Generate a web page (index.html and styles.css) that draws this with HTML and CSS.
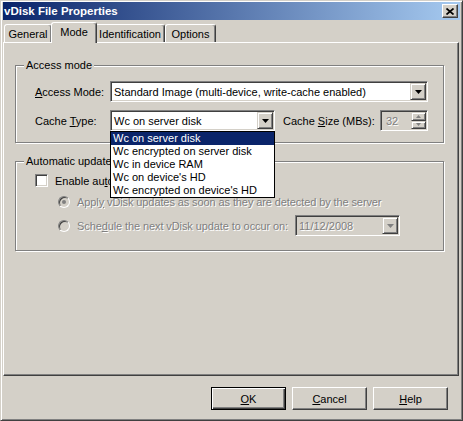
FILE: index.html
```html
<!DOCTYPE html>
<html>
<head>
<meta charset="utf-8">
<title>vDisk File Properties</title>
<link rel="stylesheet" href="styles.css">
</head>
<body>
<div class="window">
  <div class="titlebar">
    <span class="title">vDisk File Properties</span>
    <span class="close"><svg width="8" height="7" viewBox="0 0 8 7"><path d="M0.5 0.5 7.5 6.5M7.5 0.5 0.5 6.5" stroke="#000" stroke-width="1.7" fill="none"/></svg></span>
  </div>
  <div class="tabs">
    <div class="tab tab-general">General</div>
    <div class="tab tab-mode active">Mode</div>
    <div class="tab tab-ident">Identification</div>
    <div class="tab tab-options">Options</div>
  </div>
  <div class="panel">
    <div class="group group-access">
      <span class="group-title">Access mode</span>
      <div class="form-grid">
        <span class="lbl"><u>A</u>ccess Mode:</span>
        <div class="combo combo-wide">
          <span class="combo-text">Standard Image (multi-device, write-cache enabled)</span>
          <span class="arrow-btn"><svg width="7" height="4" viewBox="0 0 7 4"><path d="M0 0h7L3.5 4z" fill="#000"/></svg></span>
        </div>
        <span class="lbl">Cache <u>T</u>ype:</span>
        <div class="row2">
          <div class="combo-wrap">
            <div class="combo combo-narrow">
              <span class="combo-text">Wc on server disk</span>
              <span class="arrow-btn"><svg width="7" height="4" viewBox="0 0 7 4"><path d="M0 0h7L3.5 4z" fill="#000"/></svg></span>
            </div>
            <ul class="dropdown">
              <li class="selected">Wc on server disk</li>
              <li>Wc encrypted on server disk</li>
              <li>Wc in device RAM</li>
              <li>Wc on device's HD</li>
              <li>Wc encrypted on device's HD</li>
            </ul>
          </div>
          <span class="lbl size-lbl">Cache <u>S</u>ize (MBs):</span>
          <div class="spin">
            <span class="spin-val">32</span>
            <span class="spin-btns">
              <span class="spin-btn"><svg width="5" height="3" viewBox="0 0 5 3"><path d="M0 3h5L2.5 0z" fill="#808080"/></svg></span>
              <span class="spin-btn"><svg width="5" height="3" viewBox="0 0 5 3"><path d="M0 0h5L2.5 3z" fill="#808080"/></svg></span>
            </span>
          </div>
        </div>
      </div>
    </div>
    <div class="group group-updates">
      <span class="group-title">Automatic update</span>
      <div class="check-row">
        <span class="checkbox"></span>
        <span class="check-text">Enable au<u>t</u>o</span>
      </div>
      <div class="radio-row">
        <span class="radio"><span class="dot"></span></span>
        <span class="disabled-text">Appl<u>y</u> vDisk updates as soon as they are detected by the server</span>
      </div>
      <div class="radio-row radio-row-date">
        <span class="radio"></span>
        <span class="disabled-text schedule-text">Sche<u>d</u>ule the next vDisk update to occur on:</span>
        <div class="datebox">
          <span class="date-val">11/12/2008</span>
          <span class="arrow-btn"><svg width="7" height="4" viewBox="0 0 7 4"><path d="M0 0h7L3.5 4z" fill="#808080"/></svg></span>
        </div>
      </div>
    </div>
  </div>
  <div class="buttons">
    <span class="btn btn-default"><u>O</u>K</span>
    <span class="btn"><u>C</u>ancel</span>
    <span class="btn"><u>H</u>elp</span>
  </div>
</div>
</body>
</html>
```
FILE: styles.css
```css
* { box-sizing: border-box; }
body {
  margin: 0;
  background: #d4d0c8;
  font-family: "Liberation Sans", Arial, sans-serif;
  font-size: 11px;
  color: #000;
}
u { text-decoration: underline; text-underline-offset: 1px; }

.window {
  width: 463px;
  height: 421px;
  background: #d4d0c8;
  border: 1px solid;
  border-color: #d4d0c8 #404040 #404040 #d4d0c8;
  box-shadow: inset 1px 1px 0 #fff, inset -1px -1px 0 #808080;
  padding: 1px 2px 2px 2px;
  display: flex;
  flex-direction: column;
}

.titlebar {
  height: 18px;
  flex: none;
  display: flex;
  align-items: center;
  justify-content: space-between;
  padding: 0 2px 0 1px;
  background: linear-gradient(to right, #0a246a, #a6caf0);
  color: #fff;
  font-weight: bold;
  font-size: 11.5px;
}
.close {
  width: 16px;
  height: 14px;
  display: flex;
  align-items: center;
  justify-content: center;
  background: #d4d0c8;
  border: 1px solid;
  border-color: #fff #404040 #404040 #fff;
  box-shadow: inset -1px -1px 0 #808080;
}

.tabs {
  margin-top: 2px;
  height: 20px;
  flex: none;
  display: flex;
  align-items: flex-end;
  padding-left: 1px;
}
.tab {
  height: 18px;
  display: flex;
  align-items: center;
  justify-content: center;
  border: 1px solid;
  border-bottom: none;
  border-color: #fff #404040 transparent #fff;
  border-radius: 3px 3px 0 0;
  box-shadow: inset -1px 0 0 #808080;
  background: #d4d0c8;
}
.tab-general { width: 48px; }
.tab-mode { width: 46px; }
.tab-ident { width: 70px; }
.tab-options { width: 51px; }
.tab.active {
  height: 21px;
  margin: 0 -2px -1px -1px;
  position: relative;
  z-index: 1;
  padding-bottom: 2px;
}

.panel {
  height: 334px;
  flex: none;
  margin-right: 1px;
  border: 1px solid;
  border-color: #fff #404040 #404040 #fff;
  box-shadow: inset -1px -1px 0 #808080;
  padding: 0 14px 0 11px;
  display: flex;
  flex-direction: column;
}

.group {
  position: relative;
  width: 429px;
  border: 1px solid #808080;
  box-shadow: inset 1px 1px 0 #fff, 1px 1px 0 #fff;
}
.group-title {
  position: absolute;
  top: -7px;
  left: 8px;
  padding: 0 2px;
  line-height: 13px;
  background: #d4d0c8;
  white-space: nowrap;
}
.group-access {
  margin-top: 22px;
  padding: 15px 0 11px 19px;
}
.group-updates {
  margin-top: 18px;
  padding: 12px 0 14px 0;
}

.form-grid {
  display: grid;
  grid-template-columns: 75px 318px;
  grid-auto-rows: 21px;
  row-gap: 8px;
  align-items: center;
}
.lbl { white-space: nowrap; }

.combo {
  height: 21px;
  display: flex;
  align-items: center;
  background: #fff;
  border: 1px solid;
  border-color: #808080 #fff #fff #808080;
  box-shadow: inset 1px 1px 0 #404040, inset -1px -1px 0 #d4d0c8;
  padding: 1px;
}
.combo-wide { width: 318px; }
.combo-narrow { width: 165px; }
.combo-text {
  flex: 1;
  padding-left: 2px;
  white-space: nowrap;
  overflow: hidden;
}
.arrow-btn {
  width: 16px;
  height: 17px;
  flex: none;
  display: flex;
  align-items: center;
  justify-content: center;
  background: #d4d0c8;
  border: 1px solid;
  border-color: #d4d0c8 #404040 #404040 #d4d0c8;
  box-shadow: inset 1px 1px 0 #fff, inset -1px -1px 0 #808080;
}

.row2 {
  display: flex;
  align-items: center;
  height: 21px;
}
.combo-wrap {
  position: relative;
  z-index: 5;
}
.dropdown {
  position: absolute;
  top: 100%;
  left: 0;
  width: 165px;
  margin: 0;
  padding: 0;
  list-style: none;
  background: #fff;
  border: 1px solid #000;
}
.dropdown li {
  height: 13px;
  line-height: 13px;
  padding-left: 2px;
  white-space: nowrap;
}
.dropdown li.selected {
  background: #0a246a;
  color: #fff;
}
.size-lbl { margin-left: 8px; }

.spin {
  margin-left: auto;
  width: 48px;
  height: 21px;
  display: flex;
  align-items: center;
  background: #d4d0c8;
  border: 1px solid;
  border-color: #808080 #fff #fff #808080;
  box-shadow: inset 1px 1px 0 #404040, inset -1px -1px 0 #d4d0c8;
  padding: 1px;
}
.spin-val {
  flex: 1;
  padding-left: 4px;
  color: #808080;
  text-shadow: 1px 1px 0 #fff;
}
.spin-btns {
  width: 15px;
  height: 17px;
  display: flex;
  flex-direction: column;
}
.spin-btn {
  flex: 1;
  display: flex;
  align-items: center;
  justify-content: center;
  background: #d4d0c8;
  border: 1px solid;
  border-color: #d4d0c8 #404040 #404040 #d4d0c8;
  box-shadow: inset 1px 1px 0 #fff, inset -1px -1px 0 #808080;
}

.check-row {
  display: flex;
  align-items: center;
  height: 13px;
  margin-left: 19px;
  gap: 7px;
}
.checkbox {
  width: 13px;
  height: 13px;
  flex: none;
  background: #fff;
  border: 1px solid;
  border-color: #808080 #fff #fff #808080;
  box-shadow: inset 1px 1px 0 #404040, inset -1px -1px 0 #d4d0c8;
}
.check-text {
  white-space: nowrap;
  line-height: 14px;
}

.radio-row {
  display: flex;
  align-items: center;
  height: 13px;
  margin-top: 8px;
  margin-left: 42px;
  gap: 7px;
  white-space: nowrap;
}
.radio-row-date {
  height: 21px;
  margin-top: 7px;
}
.radio {
  width: 12px;
  height: 12px;
  flex: none;
  border-radius: 50%;
  border: 1px solid;
  border-color: #808080 #fff #fff #808080;
  box-shadow: inset 1px 1px 0 #404040;
  background: #d4d0c8;
  display: flex;
  align-items: center;
  justify-content: center;
}
.dot {
  width: 4px;
  height: 4px;
  border-radius: 50%;
  background: #808080;
}
.disabled-text {
  color: #808080;
  text-shadow: 1px 1px 0 #fff;
  letter-spacing: -0.1px;
}
.schedule-text { width: 211px; }

.datebox {
  width: 105px;
  height: 21px;
  display: flex;
  align-items: center;
  background: #d4d0c8;
  border: 1px solid;
  border-color: #808080 #fff #fff #808080;
  box-shadow: inset 1px 1px 0 #404040, inset -1px -1px 0 #d4d0c8;
  padding: 1px;
}
.date-val {
  flex: 1;
  padding-left: 2px;
  color: #808080;
  text-shadow: 1px 1px 0 #fff;
}

.buttons {
  display: flex;
  justify-content: flex-end;
  gap: 6px;
  margin-top: 11px;
  padding-right: 12px;
}
.btn {
  width: 75px;
  height: 23px;
  display: flex;
  align-items: center;
  justify-content: center;
  background: #d4d0c8;
  border: 1px solid;
  border-color: #fff #404040 #404040 #fff;
  box-shadow: inset -1px -1px 0 #808080;
}
.btn-default {
  border-color: #000;
  box-shadow: inset 1px 1px 0 #fff, inset -1px -1px 0 #404040, inset -2px -2px 0 #808080;
}
```
